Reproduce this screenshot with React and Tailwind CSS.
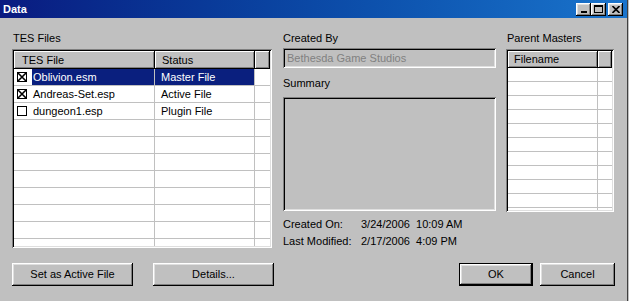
import React from 'react';

const sunken =
  'shadow-[inset_1px_1px_0_#808080,inset_-1px_-1px_0_#fff,inset_2px_2px_0_#000,inset_-2px_-2px_0_#dfdfdf]';
const raised =
  'shadow-[inset_-1px_-1px_0_#000,inset_1px_1px_0_#fff,inset_-2px_-2px_0_#808080,inset_2px_2px_0_#dfdfdf]';
const headerCell =
  'shadow-[inset_-1px_-1px_0_#000,inset_1px_1px_0_#fff,inset_-2px_-2px_0_#808080] bg-[#c0c0c0] h-full flex items-center';

const files = [
  { name: 'Oblivion.esm', status: 'Master File', checked: true, selected: true },
  { name: 'Andreas-Set.esp', status: 'Active File', checked: true },
  { name: 'dungeon1.esp', status: 'Plugin File', checked: false },
];

const CheckBox = ({ checked }) => (
  <svg width="12" height="12" viewBox="0 0 12 12" className="shrink-0">
    <rect x="1.5" y="1.5" width="9" height="9" fill="white" stroke="black" strokeWidth="1" />
    {checked && (
      <>
        <path d="M1.5 1.5 L10.5 10.5 M10.5 1.5 L1.5 10.5" stroke="black" strokeWidth="1.6" />
      </>
    )}
  </svg>
);

const TitleButton = ({ children }) => (
  <div className={`w-[15px] h-[13px] bg-[#c0c0c0] flex items-center justify-center ${raised}`}>
    {children}
  </div>
);

const Button = ({ label, className = '' }) => (
  <div className={`h-[23px] flex items-center justify-center bg-[#c0c0c0] ${raised} ${className}`}>
    {label}
  </div>
);

export default function App() {
  return (
    <div className="w-[629px] h-[301px] bg-[#c0c0c0] overflow-hidden font-['Liberation_Sans',Arial,sans-serif] text-[11px] text-black">
      <div className="w-[628px] h-full border-r border-[#404040] flex flex-col">
        {/* Title bar */}
        <div className="h-[18px] shrink-0 flex items-center bg-linear-to-r from-[#0a1a80] to-[#1a74cc] pl-[3px] pr-[4px]">
          <span className="text-white font-bold text-[11px] leading-[18px]">Data</span>
          <div className="ml-auto flex items-center">
            <TitleButton>
              <svg width="8" height="7" viewBox="0 0 8 7">
                <rect x="1" y="5" width="6" height="2" fill="black" />
              </svg>
            </TitleButton>
            <TitleButton>
              <svg width="9" height="8" viewBox="0 0 9 8">
                <rect x="0.5" y="0.5" width="8" height="7" fill="none" stroke="black" />
                <rect x="0" y="0" width="9" height="2" fill="black" />
              </svg>
            </TitleButton>
            <div className="ml-[2px]">
              <TitleButton>
                <svg width="8" height="7" viewBox="0 0 8 7">
                  <path d="M0.5 0 L7.5 7 M7.5 0 L0.5 7" stroke="black" strokeWidth="1.6" />
                </svg>
              </TitleButton>
            </div>
          </div>
        </div>

        {/* Body */}
        <div className="flex-1 pl-[12px] pr-[12px] pt-[13px]">
          <div className="flex">
            {/* TES Files */}
            <div className="w-[260px]">
              <div className="h-[14px] leading-[14px] pl-[1px]">TES Files</div>
              <div className={`mt-[4px] h-[199px] p-[2px] ${sunken}`}>
                <div className="w-full h-full bg-white overflow-hidden">
                  <div className="h-[18px] flex">
                    <div className={`w-[141px] pl-[8px] ${headerCell}`}>TES File</div>
                    <div className={`w-[100px] pl-[7px] ${headerCell}`}>Status</div>
                    <div className={`flex-1 ${headerCell}`} />
                  </div>
                  {Array.from({ length: 11 }).map((_, i) => {
                    const f = files[i];
                    return (
                      <div key={i} className="h-[17px] flex border-b border-[#c0c0c0]">
                        <div className="w-[141px] flex items-center border-r border-[#c0c0c0]">
                          {f && (
                            <>
                              <div className="w-[18px] pl-[2px] flex items-center">
                                <CheckBox checked={f.checked} />
                              </div>
                              <div
                                className={`flex-1 h-full flex items-center pl-[1px] ${
                                  f.selected ? 'bg-[#0a1f7e] text-white' : ''
                                }`}
                              >
                                {f.name}
                              </div>
                            </>
                          )}
                        </div>
                        <div className="w-[100px] flex items-center border-r border-[#c0c0c0]">
                          {f && (
                            <div
                              className={`w-full h-full flex items-center pl-[6px] ${
                                f.selected ? 'bg-[#0a1f7e] text-white' : ''
                              }`}
                            >
                              {f.status}
                            </div>
                          )}
                        </div>
                        <div className="flex-1" />
                      </div>
                    );
                  })}
                </div>
              </div>
            </div>

            {/* Created by / Summary */}
            <div className="ml-[11px] w-[213px]">
              <div className="h-[14px] leading-[14px]">Created By</div>
              <div className={`mt-[3px] h-[20px] flex items-center pl-[4px] text-[#808080] ${sunken}`}>
                Bethesda Game Studios
              </div>
              <div className="mt-[8px] h-[14px] leading-[14px]">Summary</div>
              <div className={`mt-[7px] h-[114px] ${sunken}`} />
              <div className="mt-[6px] h-[14px] leading-[14px] flex">
                <span className="w-[78px]">Created On:</span>
                <span className="whitespace-pre">3/24/2006  10:09 AM</span>
              </div>
              <div className="mt-[3px] h-[14px] leading-[14px] flex">
                <span className="w-[78px]">Last Modified:</span>
                <span className="whitespace-pre">2/17/2006  4:09 PM</span>
              </div>
            </div>

            {/* Parent Masters */}
            <div className="ml-[10px] w-[108px]">
              <div className="h-[14px] leading-[14px] pl-[1px]">Parent Masters</div>
              <div className={`mt-[4px] h-[163px] p-[2px] ${sunken}`}>
                <div className="w-full h-full bg-white overflow-hidden">
                  <div className="h-[17px] flex">
                    <div className={`w-[90px] pl-[6px] ${headerCell}`}>Filename</div>
                    <div className={`flex-1 ${headerCell}`} />
                  </div>
                  {Array.from({ length: 11 }).map((_, i) => (
                    <div key={i} className="h-[14px] flex border-b border-[#c0c0c0]">
                      <div className="w-[90px] border-r border-[#c0c0c0]" />
                      <div className="flex-1" />
                    </div>
                  ))}
                </div>
              </div>
            </div>
          </div>

          {/* Buttons */}
          <div className="mt-[15px] flex items-center">
            <Button label="Set as Active File" className="w-[121px]" />
            <Button label="Details..." className="w-[121px] ml-[20px]" />
            <div className="ml-auto h-[23px] w-[74px] border border-black flex">
              <div className={`flex-1 flex items-center justify-center bg-[#c0c0c0] ${raised}`}>OK</div>
            </div>
            <Button label="Cancel" className="w-[75px] ml-[7px]" />
          </div>
        </div>
      </div>
    </div>
  );
}
